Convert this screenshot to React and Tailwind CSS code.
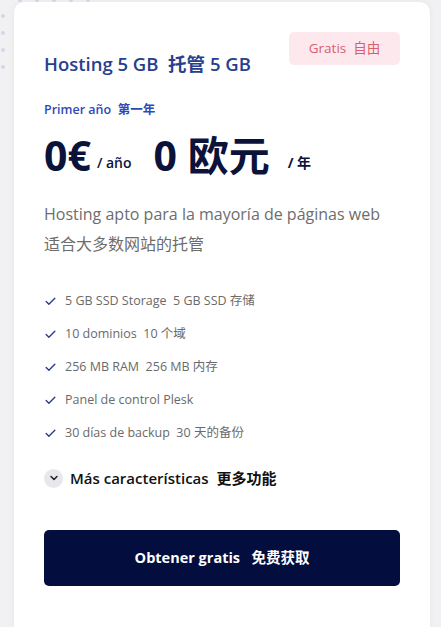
import { Check, ChevronDown } from "lucide-react";

const features = [
  "5 GB SSD Storage  5 GB SSD 存储",
  "10 dominios  10 个域",
  "256 MB RAM  256 MB 内存",
  "Panel de control Plesk",
  "30 días de backup  30 天的备份",
];

const font = {
  fontFamily: '"Open Sans", "Noto Sans CJK SC", sans-serif',
};

export default function App() {
  return (
    <div className="relative min-h-[627px] w-[441px] overflow-hidden bg-[#f1f1f3]" style={font}>
      {/* decorative dots */}
      <div className="absolute left-[1px] top-[14px] flex flex-col gap-[13px]">
        {[0, 1, 2, 3].map((i) => (
          <span key={i} className="block h-[4px] w-[4px] rounded-full bg-[#d6d6ea]" />
        ))}
      </div>
      <div className="absolute left-[18px] top-[-2px] flex gap-[13px]">
        {[0, 1, 2, 3, 4].map((i) => (
          <span key={i} className="block h-[4px] w-[4px] rounded-full bg-[#d6d6ea]" />
        ))}
      </div>

      <div className="relative ml-[14px] mt-[2px] min-h-[625px] w-[416px] rounded-t-[10px] bg-white px-[30px] pt-[30px] shadow-[0_0_6px_rgba(0,0,0,0.05)]">
        <div className="flex items-start justify-between">
          <h2 className="mt-[20px] text-[18.5px] font-semibold leading-[24px] text-[#283f8e]">
            Hosting 5 GB&nbsp;&nbsp;托管 5 GB
          </h2>
          <span className="flex h-[33px] w-[111px] items-center justify-center rounded-[5px] bg-[#fde9ed] text-[13.5px] text-[#d65f70]">
            Gratis&nbsp;&nbsp;自由
          </span>
        </div>

        <p className="mt-[25px] text-[12.5px] font-semibold leading-[18px] text-[#2f49b8]">
          Primer año&nbsp;&nbsp;第一年
        </p>

        <div className="mt-[12px] flex items-end text-[#0b133b]">
          <span className="text-[41px] font-bold leading-[48px]">0€</span>
          <span className="mb-[6px] ml-[6px] text-[14px] font-semibold">/ año</span>
          <span className="ml-[22px] text-[41px] font-bold leading-[48px]">0 欧元</span>
          <span className="mb-[6px] ml-[18px] text-[14px] font-bold">/ 年</span>
        </div>

        <p className="mt-[20px] text-[16px] leading-[30px] text-[#6d6d6d]">
          Hosting apto para la mayoría de páginas web
          <br />
          适合大多数网站的托管
        </p>

        <ul className="mt-[26px] flex flex-col">
          {features.map((f) => (
            <li key={f} className="flex h-[33px] items-center gap-[8px] text-[12.5px] text-[#6a6a6a]">
              <Check className="h-[13px] w-[13px] text-[#2b3a8c]" strokeWidth={2.5} />
              <span className="whitespace-pre">{f}</span>
            </li>
          ))}
        </ul>

        <div className="mt-[17px] flex items-center gap-[7px]">
          <span className="flex h-[19px] w-[19px] items-center justify-center rounded-full bg-[#e8e8ec]">
            <ChevronDown className="h-[12px] w-[12px] text-[#222]" strokeWidth={3} />
          </span>
          <span className="text-[15px] font-semibold text-[#111]">
            Más características&nbsp;&nbsp;更多功能
          </span>
        </div>

        <button className="mt-[40px] flex h-[56px] w-full items-center justify-center rounded-[5px] bg-[#030d3e] text-[14.5px] font-bold text-white">
          Obtener gratis&nbsp;&nbsp;&nbsp;免费获取
        </button>
      </div>
    </div>
  );
}
